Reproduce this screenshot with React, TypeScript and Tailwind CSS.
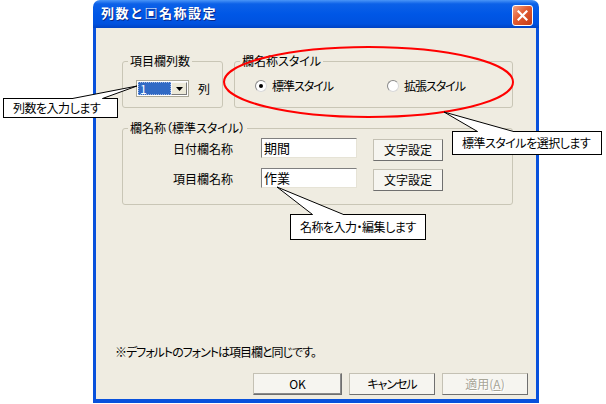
import React from 'react';

// group box drawn with fieldset + legend
const GroupBox = ({ label, className = '', children }: any) => (
    <fieldset className={`border border-[#c9c6b6] rounded-[3px] ${className}`}>
        <legend className="ml-[5px] px-[2px] text-[12px] leading-[12px] text-black whitespace-nowrap">{label}</legend>
        {children}
    </fieldset>
);

const Radio = ({ checked = false, label }: any) => (
    <div className="flex items-center gap-[5px]">
        <span className="w-[12px] h-[12px] rounded-full bg-white border border-[#8a8a8a] border-b-[#d8d8d8] border-r-[#d8d8d8] flex items-center justify-center">
            {checked && <span className="w-[4px] h-[4px] rounded-full bg-black"></span>}
        </span>
        <span className="text-[12px] leading-[14px] tracking-[-1px] whitespace-nowrap">{label}</span>
    </div>
);

const TextBox = ({ value }: any) => (
    <div className="w-[96px] h-[20px] bg-white border border-[#7f7f7f] border-b-[#e6e3d6] border-r-[#e6e3d6] pl-[2px] text-[13px] leading-[17px]">
        {value}
    </div>
);

const Button = ({ children, className = '' }: any) => (
    <div className={`h-[22px] flex items-center justify-center bg-[#f6f5f0] border border-[#c4c1b4] border-r-[#6f6f6f] border-b-[#6f6f6f] text-[12px] whitespace-nowrap ${className}`}>
        {children}
    </div>
);

// callout box; its tail is drawn in the svg layer
const Callout = ({ text, className }: any) => (
    <div className={`absolute bg-white border border-black flex items-center pl-[9px] text-[12px] leading-[16px] tracking-[-0.5px] whitespace-nowrap ${className}`}>
        {text}
    </div>
);

export default function App() {
    return (
        <div className="relative w-[606px] h-[404px] bg-white overflow-hidden font-['Noto_Sans_CJK_JP',sans-serif] [font-feature-settings:'palt'] text-black">
            {/* Dialog window */}
            <div className="ml-[93px] w-[446px] h-[403px] flex flex-col">
                <div className="h-[28px] rounded-t-[7px] bg-[linear-gradient(180deg,#4a95f7_0%,#0c61e8_14%,#0057e6_50%,#0052df_85%,#0043c4_100%)] flex items-start justify-between pl-[8px] pr-[6px]">
                    <span className="mt-[5px] text-white font-bold text-[13px] leading-[16px] tracking-[1.5px] [font-feature-settings:normal] [text-shadow:1px_1px_0_#0a2a8a]">列数と▣名称設定</span>
                    <div className="mt-[5px] w-[21px] h-[21px] rounded-[3px] border border-white bg-[linear-gradient(135deg,#f3a385_0%,#e15a30_45%,#c43c16_100%)] flex items-center justify-center">
                        <svg width="11" height="11" viewBox="0 0 11 11">
                            <path d="M1.5 1.5 L9.5 9.5 M9.5 1.5 L1.5 9.5" stroke="white" strokeWidth="2.2" strokeLinecap="square" />
                        </svg>
                    </div>
                </div>

                <div className="flex-1 bg-[#efece1] border-x-[3px] border-b-[4px] border-[#0851dc] pt-[27px] pl-[26px] flex flex-col">
                    <div className="flex gap-[11px]">
                        <GroupBox label="項目欄列数" className="w-[101px] h-[53px]">
                            <div className="flex items-center mt-[13px] ml-[13px] gap-[9px]">
                                <div className="w-[53px] h-[17px] border border-[#a9a797] bg-white flex p-[1px]">
                                    <div className="flex-1 bg-[#316ac5] border border-dotted border-[#9fb6e0] text-white text-[12px] leading-[12px] pl-[1px]">1</div>
                                    <div className="w-[16px] bg-[#ece9d8] border border-[#f8f8f8] border-r-[#7a7a7a] border-b-[#7a7a7a] flex items-center justify-center">
                                        <svg width="7" height="4" viewBox="0 0 7 4"><path d="M0 0 H7 L3.5 4 Z" fill="black" /></svg>
                                    </div>
                                </div>
                                <span className="text-[12px] leading-[14px]">列</span>
                            </div>
                        </GroupBox>
                        <GroupBox label="欄名称スタイル" className="w-[279px] h-[53px]">
                            <div className="flex mt-[12px] ml-[20px]">
                                <div className="w-[132px]"><Radio checked label="標準スタイル" /></div>
                                <Radio label="拡張スタイル" />
                            </div>
                        </GroupBox>
                    </div>

                    <GroupBox label="欄名称（標準スタイル）" className="mt-[14px] w-[391px] h-[83px]">
                        <div className="flex flex-col gap-[7px] mt-[4px] ml-[50px]">
                            <div className="flex items-start h-[23px]">
                                <span className="w-[88px] shrink-0 mt-[1px] text-[12px] leading-[20px]">日付欄名称</span>
                                <TextBox value="期間" />
                                <Button className="ml-[16px] mt-[1px] w-[70px]">文字設定</Button>
                            </div>
                            <div className="flex items-start h-[23px]">
                                <span className="w-[88px] shrink-0 mt-[1px] text-[12px] leading-[20px]">項目欄名称</span>
                                <TextBox value="作業" />
                                <Button className="ml-[16px] mt-[1px] w-[70px]">文字設定</Button>
                            </div>
                        </div>
                    </GroupBox>

                    <p className="mt-[140px] ml-[-7px] text-[12px] leading-[14px] tracking-[-1px] whitespace-nowrap">※デフォルトのフォントは項目欄と同じです。</p>

                    <div className="mt-[14px] flex justify-end pr-[8px] gap-[7px]">
                        <Button className="w-[89px] border-[#2b2b2b] border-r-[#1a1a1a] border-b-[#1a1a1a] shadow-[inset_-1px_-1px_0_#8a8a8a]">OK</Button>
                        <Button className="w-[86px] tracking-[-1px]">キャンセル</Button>
                        <Button className="w-[86px] text-[#a7a597] [text-shadow:1px_1px_0_#ffffff]">適用(<u>A</u>)</Button>
                    </div>
                </div>
            </div>

            {/* annotations */}
            <Callout text="列数を入力します" className="left-[3px] top-[98px] w-[115px] h-[20px]" />
            <Callout text="標準スタイルを選択します" className="left-[452px] top-[131px] w-[150px] h-[24px]" />
            <Callout text="名称を入力・編集します" className="left-[290px] top-[214px] w-[136px] h-[26px]" />

            <svg className="absolute inset-0 pointer-events-none" width="606" height="404" viewBox="0 0 606 404">
                <ellipse cx="368.5" cy="82" rx="144.5" ry="35" fill="none" stroke="#ff0000" strokeWidth="2" />
                <rect x="73" y="97.5" width="29" height="2" fill="white" />
                <polyline points="72.5,98.5 137,86 102.5,98.5" fill="white" stroke="black" strokeWidth="1" />
                <rect x="478" y="130.5" width="35" height="2" fill="white" />
                <polyline points="477.5,131.5 444,112 513.5,131.5" fill="white" stroke="black" strokeWidth="1" />
                <rect x="313" y="213.5" width="30" height="2" fill="white" />
                <polyline points="312.5,214.5 277,187 343.5,214.5" fill="white" stroke="black" strokeWidth="1" />
            </svg>
        </div>
    );
}
